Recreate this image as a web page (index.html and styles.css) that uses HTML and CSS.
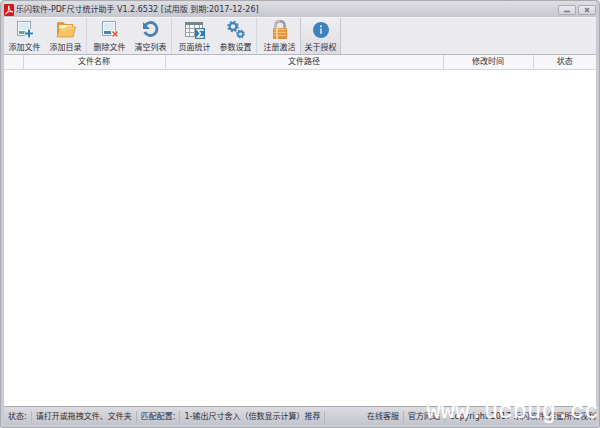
FILE: index.html
```html
<!DOCTYPE html>
<html lang="zh-CN">
<head>
<meta charset="utf-8">
<title>乐闪软件-PDF尺寸统计助手</title>
<link rel="stylesheet" href="styles.css">
</head>
<body>
<div class="window">
  <header class="titlebar">
    <svg class="logo" viewBox="0 0 10 12"><rect width="10" height="12" rx="1" fill="#d9151b"/><path d="M1.5 10C4 8.5 5.3 5 4.8 1.8C4.2 4.5 6 7.5 8.8 8C6.500 7 3.500 7.500 1.500 10" fill="none" stroke="#fff" stroke-width="1"/></svg>
    <h1>乐闪软件-PDF尺寸统计助手 V1.2.6532 [试用版 到期:2017-12-26]</h1>
    <div class="controls">
      <button aria-label="最小化"><svg viewBox="0 0 8 8"><path d="M1 5.500H7" stroke="#77777f" stroke-width="1.500"/></svg></button>
      <button aria-label="关闭"><svg viewBox="0 0 8 8"><path d="M2 2L6 6M6 2L2 6" stroke="#77777f" stroke-width="1.500"/></svg></button>
    </div>
  </header>
  <nav class="toolbar">
    <div class="group">
      <button><svg viewBox="0 0 20 20"><path d="M2.500 1.500H15.500V15.500H2.500Z" fill="#f5f9fc" stroke="#92a6b4"/><path d="M4 3H14V10H4Z" fill="#dceaf4"/><path d="M4 11H11V14H4Z" fill="#6da08a"/><path d="M14 9V18M9.500 13.500H18.500" stroke="#fff" stroke-width="4"/><path d="M14 9.500V17.500M10 13.500H18" stroke="#3979b7" stroke-width="2"/></svg><span>添加文件</span></button>
      <button><svg viewBox="0 0 20 20"><path d="M1 16V3L2 2H7L9 4H17V8L18 16Z" fill="#e1972c"/><path d="M3 5H16V13H3Z" fill="#fff3ca"/><path d="M1 17L3 9H9L11 7H19.500L17 17Z" fill="#f9c45d" stroke="#d98d25" stroke-width=".7"/><path d="M4 10H9L11 8H18" fill="none" stroke="#ffe4a0"/></svg><span>添加目录</span></button>
    </div>
    <div class="group">
      <button><svg viewBox="0 0 20 20"><path d="M2.500 1.500H15.500V15.500H2.500Z" fill="#f5f9fc" stroke="#92a6b4"/><path d="M4 3H14V10H4Z" fill="#dceaf4"/><path d="M4 11H11V14H4Z" fill="#4785b9"/><path d="M12 11L18 17M18 11L12 17" stroke="#fff" stroke-width="3"/><path d="M12.500 11.500L17.500 16.500M17.500 11.500L12.500 16.500" stroke="#dc5340" stroke-width="1.700"/></svg><span>删除文件</span></button>
      <button><svg viewBox="0 0 20 20"><path d="M4 5.500A6.500 6.500 0 1 1 3.700 12" fill="none" stroke="#4583b9" stroke-width="2.800"/><path d="M2 2V9H9Z" fill="#4583b9"/></svg><span>清空列表</span></button>
    </div>
    <div class="group">
      <button><svg viewBox="0 0 20 20"><path d="M.5 2.500H17.500V16.500H.5Z" fill="#fafbfc" stroke="#8796a1"/><path d="M0 2H18V5H0Z" fill="#718592"/><path d="M0 8.500H18M0 12.500H18M4.500 5V17M9.500 5V17M14.500 5V17" stroke="#9ba7af"/><path d="M10 8H20V19H10Z" fill="#347caf"/><path d="M18 11V10H12.500L15.500 13.500L12.500 17H18V16" fill="none" stroke="#fff" stroke-width="1.400"/></svg><span>页面统计</span></button>
      <button><svg viewBox="0 0 20 20"><g fill="none" stroke="#4584ba"><circle cx="7" cy="6.500" r="3.400" stroke-width="2.200"/><circle cx="7" cy="6.500" r="5" stroke-width="1.600" stroke-dasharray="2 1.927"/><circle cx="14.500" cy="14" r="2.500" stroke-width="1.800"/><circle cx="14.500" cy="14" r="3.800" stroke-width="1.300" stroke-dasharray="1.500 1.480"/></g></svg><span>参数设置</span></button>
    </div>
    <div class="group">
      <button><svg viewBox="0 0 20 20"><path d="M5.500 9V5Q5.500 1.300 10 1.300T14.500 5V9" fill="none" stroke="#97999b" stroke-width="2.400"/><path d="M5.200 9V5Q5.500 1 10 1" fill="none" stroke="#d8d8d8"/><rect x="3" y="8" width="14" height="11" rx="1" fill="#e38d30"/><path d="M4 9.500H16M4 12.500H16M4 15.500H16" stroke="#f8bd70" stroke-width="1.400"/><path d="M7 8V19" stroke="#ffd08b" stroke-width="2"/></svg><span>注册激活</span></button>
      <button class="active"><svg viewBox="0 0 20 20"><circle cx="10" cy="10" r="8" fill="#3f81b9"/><path d="M10 8.500V14" stroke="#eaf4fb" stroke-width="1.400"/><circle cx="10" cy="6.200" r="1" fill="#eaf4fb"/></svg><span>关于授权</span></button>
    </div>
  </nav>
  <main>
    <table>
      <colgroup><col class="c-mark"><col class="c-name"><col class="c-path"><col class="c-time"><col class="c-state"></colgroup>
      <thead><tr><th></th><th>文件名称</th><th>文件路径</th><th>修改时间</th><th>状态</th></tr></thead>
    </table>
  </main>
  <footer>
    <span>状态:</span><span>请打开或拖拽文件、文件夹</span><span>匹配配置:</span><span>1-输出尺寸舍入（倍数显示计算）推荐</span>
    <a class="service" href="#">在线客服</a><a href="#">官方网站</a><span class="copy">Copyright 2017 乐闪软件 保留所有权利</span>
  </footer>
  <div class="watermark">www.ucbug.cc</div>
</div>
</body>
</html>
```
FILE: styles.css
```css
* { box-sizing: border-box; }
body { margin: 0; background: #fff; }
.window {
  position: relative;
  display: flex;
  flex-direction: column;
  min-height: 100vh;
  padding: 0 3px 2px;
  border: 1px solid #aaaab2;
  border-radius: 4px 4px 2px 2px;
  background: #cbcbd3;
  color: #30303a;
  font: 8px/12px "DejaVu Sans", "Noto Sans CJK SC", sans-serif;
}
button { font: inherit; color: inherit; padding: 0; }
.titlebar {
  display: flex;
  align-items: center;
  height: 16px;
  padding-top: 1px;
  background: linear-gradient(#dedee3, #c7c7cf);
}
.logo { width: 10px; height: 12px; margin-right: 2px; }
h1 { flex: 1; margin: 0; font: inherit; white-space: nowrap; }
.controls { display: flex; gap: 2px; }
.controls button {
  display: flex;
  align-items: center;
  justify-content: center;
  width: 18px;
  height: 10px;
  border: 1px solid #aaaab2;
  border-radius: 2px;
  background: linear-gradient(#ededf0, #d2d2d8);
}
.controls svg { width: 8px; height: 8px; }
.toolbar { display: flex; height: 38px; background: #ebebef; border-top: 1px solid #f5f5f7; border-bottom: 1px solid #b8b8bf; }
.group { display: flex; }
.group + .group { padding-left: 2px; border-left: 1px solid #d2d7df; }
.toolbar button {
  display: flex;
  flex-direction: column;
  align-items: center;
  width: 41px;
  padding-top: 2px;
  border: 0;
  background: none;
  white-space: nowrap;
}
.toolbar svg { width: 20px; height: 20px; }
.toolbar span { margin-top: 2px; }
.toolbar .active {
  border: solid #c6c6cd;
  border-width: 0 1px;
  background: linear-gradient(#efeff2, #dcdce1);
}
main { flex: 1; background: #fff; border-bottom: 1px solid #a9a9b1; }
table { width: 100%; border-collapse: collapse; table-layout: fixed; }
.c-mark { width: 19px; }
.c-name { width: 142px; }
.c-time { width: 90px; }
.c-state { width: 63px; }
th { height: 14px; padding: 1px 0 0; font-weight: 400; line-height: 12px; background: #f7f7f9; border-right: 1px solid #d4d4d9; border-bottom: 1px solid #d4d4d9; }
th:last-child { border-right: 0; }
footer {
  display: flex;
  align-items: center;
  height: 18px;
  padding-top: 2px;
  background: linear-gradient(#dcdce1, #c4c4cd);
  white-space: nowrap;
}
footer > * { padding: 0 4px; border-right: 1px solid #b7b7c0; }
footer a { color: inherit; text-decoration: none; }
footer .service { margin-left: auto; }
footer .copy { border: 0; padding-right: 0; }
.watermark {
  position: absolute;
  right: 0;
  bottom: 3px;
  color: #fff;
  font: 24px/24px "Liberation Mono", monospace;
  pointer-events: none;
}
```
